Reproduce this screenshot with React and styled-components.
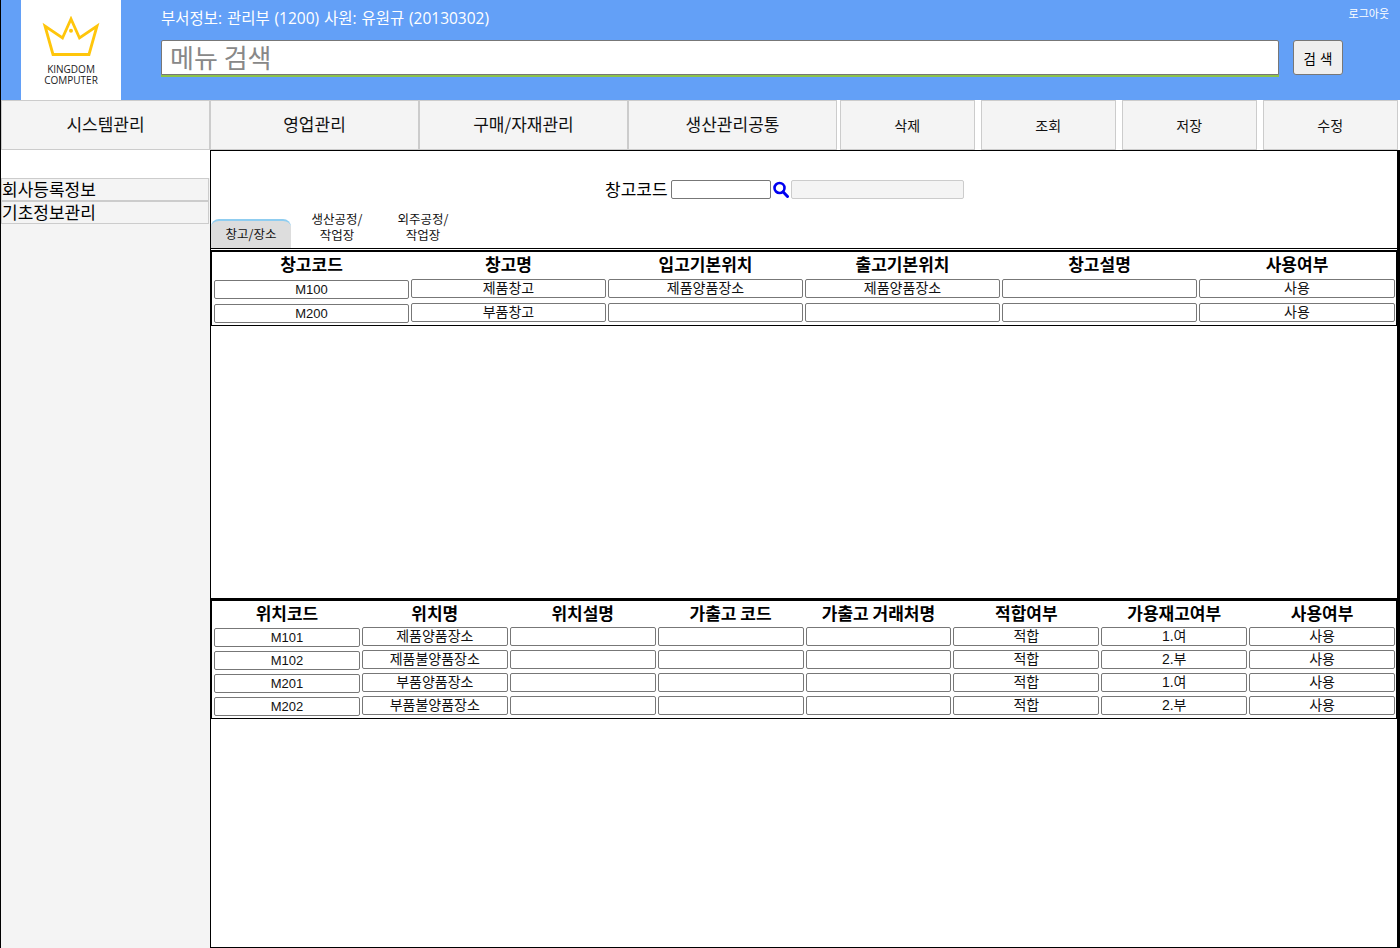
import React from "react";
import styled, { createGlobalStyle } from "styled-components";

const Global = createGlobalStyle`
  html, body { margin: 0; padding: 0; background: #fff; }
  body { font-family: "Liberation Sans", "Noto Sans CJK KR", sans-serif; color: #000; }
  * { box-sizing: border-box; }
`;

const Page = styled.div`
  width: 1400px; height: 948px; overflow: hidden;
  display: flex; flex-direction: column;
  border-left: 1px solid #000;
`;
const Header = styled.header`
  height: 100px; flex: none; background: #63a0f7;
  display: flex; position: relative; padding-left: 20px;
`;
const LogoBox = styled.div`
  width: 100px; height: 100px; background: #fff; flex: none;
  display: flex; flex-direction: column; align-items: center; padding-top: 16px;
`;
const LogoText = styled.div`
  font: 10px/11px "Open Sans", "Noto Sans", sans-serif; text-align: center; color: #222; margin-top: 6px;
`;
const HeaderMain = styled.div`
  flex: 1; padding: 6px 0 0 40px; display: flex; flex-direction: column;
`;
const UserInfo = styled.div`
  font: 15.5px/24px "Open Sans", "Noto Sans CJK KR", sans-serif; color: #fff; height: 34px; white-space: nowrap; word-spacing: 0.8px;
`;
const SearchRow = styled.div`display: flex; gap: 14px; align-items: flex-start;`;
const MenuSearch = styled.div`
  width: 1118px; height: 35px; background: #fff;
  border: 1px solid #777; border-radius: 2px 2px 0 0;
  box-shadow: 0 2px 0 #8bc34a;
  font: 26px/32px "Noto Sans CJK KR", sans-serif; color: #888; padding-left: 8px;
`;
const SearchButton = styled.button`
  width: 50px; height: 35px; background: #efefef; border: 1px solid #777; border-radius: 3px;
  font: 13.5px "Noto Sans CJK KR", sans-serif; color: #000; padding: 0; word-spacing: 1px;
`;
const Logout = styled.a`
  position: absolute; right: 11px; top: 5px; font: 11px/16px "Noto Sans CJK KR", sans-serif; color: #fff;
`;
const Nav = styled.nav`display: flex; height: 50px; flex: none;`;
const NavItem = styled.div`
  width: 209px; flex: none; background: #f4f4f4; border: 1px solid #ccc;
  display: flex; align-items: center; justify-content: center;
  font: 17px "Noto Sans CJK KR", sans-serif; color: #111; padding-bottom: 3px;
`;
const NavActions = styled.div`display: flex; gap: 6.5px; margin-left: 3px;`;
const ActionItem = styled(NavItem)`
  width: 134.5px; font-size: 14px; padding-bottom: 0;
`;
const Body = styled.div`flex: 1; display: flex; min-height: 0;`;
const Sidebar = styled.aside`
  width: 209px; flex: none; display: flex; flex-direction: column;
`;
const SideSpacer = styled.div`height: 28px; background: #fff; flex: none;`;
const SideList = styled.div`flex: 1; background: #f4f4f4;`;
const SideItem = styled.div`
  height: 23px; width: 208px; border: 1px solid #ccc; background: #f4f4f4;
  font: 17px/19px "Noto Sans CJK KR", sans-serif; color: #000; padding-left: 0;
  white-space: nowrap;
`;
const Main = styled.main`
  width: 1190px; flex: none;
  border: 1px solid #000; border-right-width: 3px; display: flex; flex-direction: column;
`;
const Filter = styled.div`
  height: 58px; flex: none; padding-top: 29px; padding-left: 394px;
  display: flex; align-items: flex-start;
`;
const FilterLabel = styled.label`font: 17px/17px "Noto Sans CJK KR", sans-serif; margin-right: 3px; white-space: nowrap;`;
const CodeInput = styled.div`
  width: 100px; height: 19px; border: 1px solid #777; border-radius: 2px; background: #fff;
`;
const NameInput = styled.div`
  width: 173px; height: 19px; border: 1px solid #ccc; border-radius: 2px; background: #f4f4f4; margin-left: 2px;
`;
const SearchIcon = styled.svg`width: 17px; height: 17px; margin-left: 1px; margin-top: 1px; flex: none;`;
const TabRow = styled.div`
  display: flex; height: 40px; flex: none; border-bottom: 1px solid #000;
`;
const Tab = styled.div`
  width: 80px; height: 29px; margin-top: 10px; background: #ddd; border-top: 2px solid #8fcdf0;
  border-radius: 8px 8px 0 0; font: 12.5px/26px "Noto Sans CJK KR", sans-serif; text-align: center; color: #111; flex: none;
`;
const PlainTab = styled.div`
  width: 86px; font: 12.5px/16px "Noto Sans CJK KR", sans-serif; text-align: center; color: #111; flex: none; padding-top: 2px; margin-left: ${p => p.$first ? "3px" : "0"};
`;
const Pane = styled.div`
  height: ${p => p.$h}px; flex: none; padding-top: ${p => p.$pt || 0}px;
`;
const GridBox = styled.div`
  border: 1px solid #000; border-top-width: ${p => p.$top}px;
  display: grid; grid-template-columns: ${p => p.$template}; column-gap: 2px; row-gap: ${p => p.$gap}px;
  padding: 0 1px 2px 2px; background: #fff;
`;
const Th = styled.div`
  font: bold 17px/24px "Noto Sans CJK KR", sans-serif; text-align: center; height: 23px; color: #000; white-space: nowrap;
`;
const Td = styled.div`
  height: 19px; border: 1px solid #777; border-radius: 2px; background: #fff;
  position: relative; top: ${p => p.$code ? "0" : "-1px"};
  font: ${p => p.$code ? "13px" : "14px"}/17px "Liberation Sans", "Noto Sans CJK KR", sans-serif; text-align: center; color: #111;
  white-space: nowrap;
`;

const top = {
  head: ["창고코드", "창고명", "입고기본위치", "출고기본위치", "창고설명", "사용여부"],
  rows: [
    ["M100", "제품창고", "제품양품장소", "제품양품장소", "", "사용"],
    ["M200", "부품창고", "", "", "", "사용"],
  ],
};
const bottom = {
  head: ["위치코드", "위치명", "위치설명", "가출고 코드", "가출고 거래처명", "적합여부", "가용재고여부", "사용여부"],
  rows: [
    ["M101", "제품양품장소", "", "", "", "적합", "1.여", "사용"],
    ["M102", "제품불양품장소", "", "", "", "적합", "2.부", "사용"],
    ["M201", "부품양품장소", "", "", "", "적합", "1.여", "사용"],
    ["M202", "부품불양품장소", "", "", "", "적합", "2.부", "사용"],
  ],
};

const Grid = ({ data, ...rest }) => (
  <GridBox {...rest}>
    {data.head.map((h) => <Th key={h}>{h}</Th>)}
    {data.rows.map((r, i) => r.map((c, j) => (
      <Td key={`${i}-${j}`} $code={j === 0}>{c}</Td>
    )))}
  </GridBox>
);

export default function App() {
  return (
    <Page>
      <Global />
      <Header>
        <LogoBox>
          <svg width="60" height="42" viewBox="0 0 60 42" fill="none">
            <path d="M12 38.5 L4 10 L21.5 22 L30 3 L38.5 22 L56 10 L48 38.5 Z" stroke="#ffc60b" strokeWidth="2.8" strokeLinejoin="miter" />
            <circle cx="30" cy="14.7" r="2" fill="#ffc60b" />
          </svg>
          <LogoText>KINGDOM<br />COMPUTER</LogoText>
        </LogoBox>
        <HeaderMain>
          <UserInfo>부서정보: 관리부 (1200) 사원: 유원규 (20130302)</UserInfo>
          <SearchRow>
            <MenuSearch>메뉴 검색</MenuSearch>
            <SearchButton>검 색</SearchButton>
          </SearchRow>
        </HeaderMain>
        <Logout>로그아웃</Logout>
      </Header>
      <Nav>
        <NavItem>시스템관리</NavItem>
        <NavItem>영업관리</NavItem>
        <NavItem>구매/자재관리</NavItem>
        <NavItem>생산관리공통</NavItem>
        <NavActions>
          <ActionItem>삭제</ActionItem>
          <ActionItem>조회</ActionItem>
          <ActionItem>저장</ActionItem>
          <ActionItem>수정</ActionItem>
        </NavActions>
      </Nav>
      <Body>
        <Sidebar>
          <SideSpacer />
          <SideList>
            <SideItem>회사등록정보</SideItem>
            <SideItem>기초정보관리</SideItem>
          </SideList>
        </Sidebar>
        <Main>
          <Filter>
            <FilterLabel>창고코드</FilterLabel>
            <CodeInput />
            <SearchIcon viewBox="0 0 17 17">
              <circle cx="7.5" cy="7" r="5" fill="none" stroke="#0000f0" strokeWidth="2.6" />
              <path d="M11 10.8 L15.5 15.5" stroke="#0000f0" strokeWidth="3" strokeLinecap="round" />
            </SearchIcon>
            <NameInput />
          </Filter>
          <TabRow>
            <Tab>창고/장소</Tab>
            <PlainTab $first>생산공정/<br />작업장</PlainTab>
            <PlainTab>외주공정/<br />작업장</PlainTab>
          </TabRow>
          <Pane $h={349} $pt={1}>
            <Grid data={top} $template="repeat(5, 195px) 196px" $top={2} $gap={5} />
          </Pane>
          <Pane $h={300}>
            <Grid data={bottom} $template="repeat(8, 1fr)" $top={3} $gap={4} />
          </Pane>
        </Main>
      </Body>
    </Page>
  );
}
